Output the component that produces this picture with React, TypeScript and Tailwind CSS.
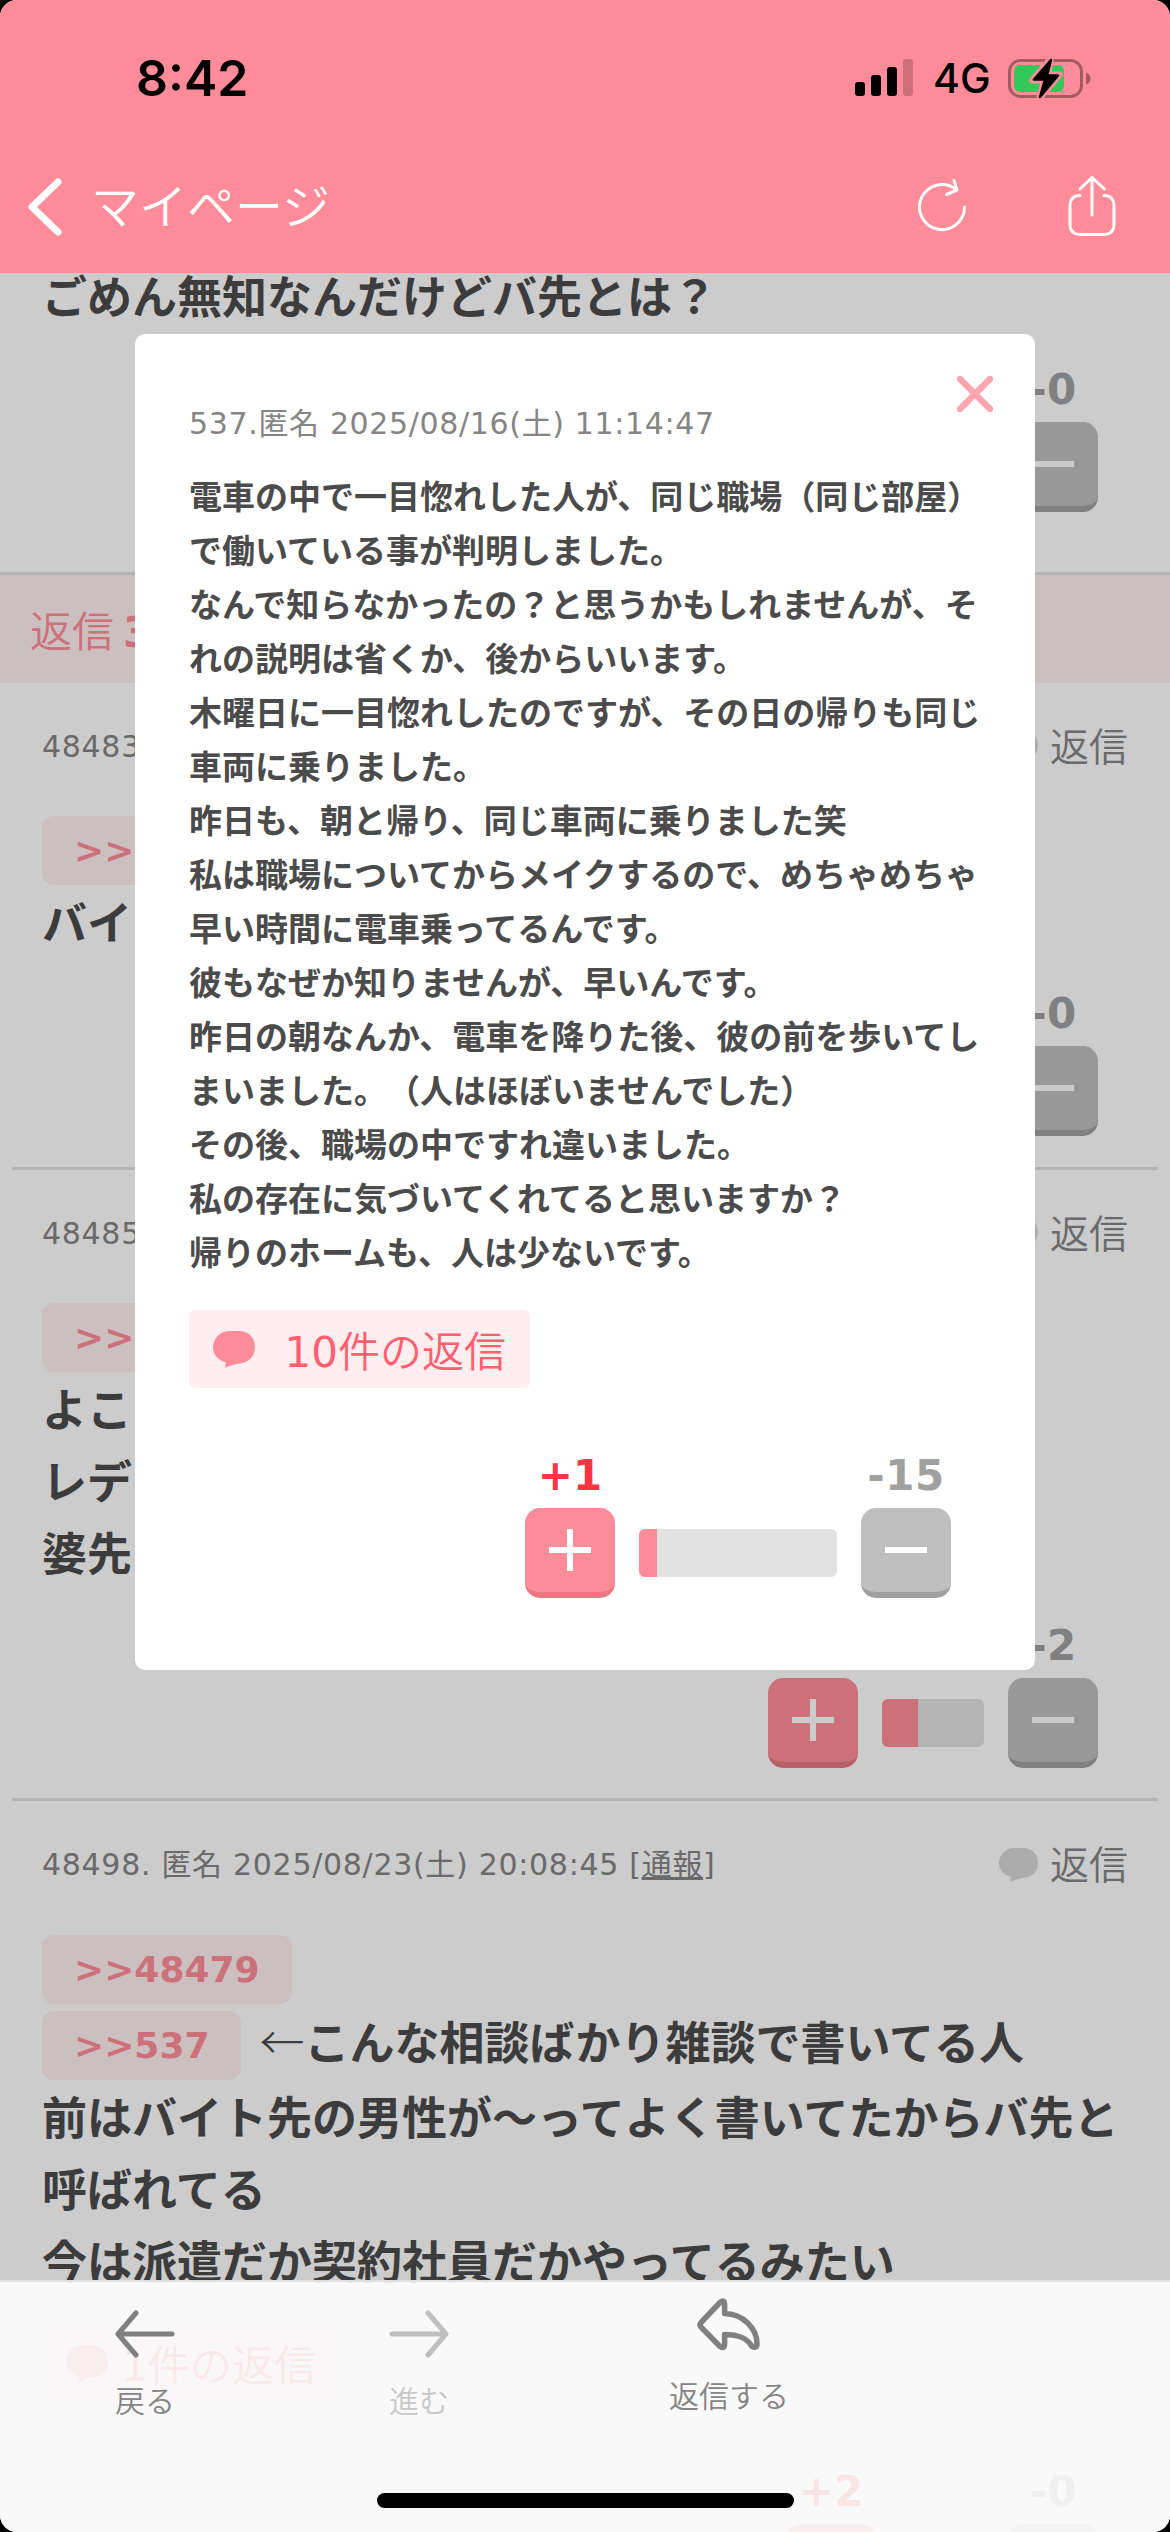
import type { ReactNode } from "react";

const jp = "font-['DejaVu_Sans','Noto_Sans_CJK_JP',sans-serif]";
const jpOnly = "font-['Noto_Sans_CJK_JP',sans-serif]";

const modalLines = [
  "電車の中で一目惚れした人が、同じ職場（同じ部屋）",
  "で働いている事が判明しました。",
  "なんで知らなかったの？と思うかもしれませんが、そ",
  "れの説明は省くか、後からいいます。",
  "木曜日に一目惚れしたのですが、その日の帰りも同じ",
  "車両に乗りました。",
  "昨日も、朝と帰り、同じ車両に乗りました笑",
  "私は職場についてからメイクするので、めちゃめちゃ",
  "早い時間に電車乗ってるんです。",
  "彼もなぜか知りませんが、早いんです。",
  "昨日の朝なんか、電車を降りた後、彼の前を歩いてし",
  "まいました。（人はほぼいませんでした）",
  "その後、職場の中ですれ違いました。",
  "私の存在に気づいてくれてると思いますか？",
  "帰りのホームも、人は少ないです。",
];

function Bubble({ className }: { className: string }) {
  return (
    <svg viewBox="0 0 42 36.5" preserveAspectRatio="none" className={className} fill="currentColor">
      <path d="M16 0H26C36 0 42 7 42 16S36 31 27 32C22 32.500 17 34 12 36.500L13 31C5 29 0 23 0 16S6 0 16 0Z" />
    </svg>
  );
}

function StatusBar() {
  return (
    <div className="flex h-[154px] items-start justify-between pl-[136px] pr-[78px] font-[Inter,sans-serif] text-black">
      <span className="mt-[48px] text-[50px] font-semibold leading-[60px]">8:42</span>
      <div className="mt-[54px] flex h-[48px] items-center">
        <svg width="60" height="40" viewBox="0 0 60 40" className="mr-[18px]">
          <rect x="0" y="24" width="10" height="14" rx="3" />
          <rect x="16" y="17" width="10" height="21" rx="3" />
          <rect x="32" y="9" width="10" height="29" rx="3" />
          <rect x="48" y="1" width="10" height="37" rx="3" opacity="0.2" />
        </svg>
        <span className="w-[75px] text-[41px] font-medium leading-[48px]">4G</span>
        <svg width="84" height="44" viewBox="0 0 84 44">
          <rect x="1.500" y="4.500" width="72" height="36" rx="11" fill="none" stroke="#a35a62" strokeWidth="3" />
          <path d="M78 16.500q4.500 1.500 4.500 6t-4.500 6z" fill="#a35a62" />
          <rect x="6" y="9" width="50" height="27" rx="6" fill="#34c759" />
          <path d="M43 2L24 24.500H36L31 43L52 18.500H40Z" fill="#000" stroke="#ff8c98" strokeWidth="6" strokeLinejoin="round" />
          <path d="M43 4L26 23.500H37L32 41L50 19.500H39Z" stroke="#000" strokeWidth="2.500" strokeLinejoin="round" />
        </svg>
      </div>
    </div>
  );
}

function Header() {
  return (
    <header className="h-[273px] bg-[#ff8c98]">
      <StatusBar />
      <nav className="flex h-[106px] items-center pl-[26px] pr-[52px] text-white">
        <svg width="38" height="60" viewBox="0 0 38 60" fill="none" stroke="currentColor" strokeWidth="7" strokeLinecap="round" strokeLinejoin="round">
          <path d="M32 5L6 30L32 55" />
        </svg>
        <span className={`mb-[8px] ml-[27px] text-[48px] font-[350] leading-[60px] ${jpOnly}`}>マイページ</span>
        <svg width="54" height="66" viewBox="0 0 54 66" className="ml-auto" fill="none" stroke="currentColor" strokeWidth="3" strokeLinecap="round" strokeLinejoin="round">
          <path d="M49.500 33A22.500 22.500 0 1 1 41 15.500" />
          <path d="M39 6.500L42 16L31.500 20.500" />
        </svg>
        <svg width="52" height="66" viewBox="0 0 52 66" className="ml-[97px]" fill="none" stroke="currentColor" strokeWidth="3" strokeLinecap="round" strokeLinejoin="round">
          <path d="M14 21.500h-1a9 9 0 0 0-9 9v21a9 9 0 0 0 9 9h26a9 9 0 0 0 9-9v-21a9 9 0 0 0-9-9h-1" />
          <path d="M26 41V3.500M14 15L26 3.500L38.500 15" />
        </svg>
      </nav>
    </header>
  );
}

function Votes({ plus, minus, bar, fill, className }: { plus?: string; minus: string; bar: number; fill: number; className: string }) {
  return (
    <div className={`flex items-end justify-end ${className}`}>
      <div className="w-[90px]">
        <p className="h-[66px] text-center font-['DejaVu_Sans',sans-serif] text-[42px] font-bold leading-[68px] text-[#ff3344]">{plus}</p>
        <div className="flex h-[90px] justify-center rounded-[15px] border-b-[6px] border-[#e87782] bg-[#ff8c98] pt-[21px]">
          <svg width="42" height="42" className="fill-white">
            <path d="M18 0h6v18h18v6h-18v18h-6v-18h-18v-6h18z" />
          </svg>
        </div>
      </div>
      <div className="mx-[24px] mb-[21px] h-[48px] overflow-hidden rounded-[6px] bg-[#e2e2e2]" style={{ width: bar }}>
        <div className="h-full bg-[#ff8c98]" style={{ width: fill }}></div>
      </div>
      <div className="w-[90px]">
        <p className="flex h-[66px] justify-center whitespace-nowrap font-['DejaVu_Sans',sans-serif] text-[42px] font-bold leading-[68px] tracking-[0.5px] text-[#a0a0a0]">{minus}</p>
        <div className="flex h-[90px] justify-center rounded-[15px] border-b-[6px] border-[#a0a0a0] bg-[#bfbfbf] pt-[39px]">
          <div className="h-[6px] w-[42px] bg-white"></div>
        </div>
      </div>
    </div>
  );
}

function Anchor({ children }: { children: ReactNode }) {
  return (
    <span className="flex h-[69px] w-fit items-center rounded-[12px] bg-[#ffeff0] px-[32px] font-['DejaVu_Sans',sans-serif] text-[36px] font-bold text-[#ff8c98]">
      {children}
    </span>
  );
}

function Line({ children }: { children: ReactNode }) {
  return <p className={`h-[72px] whitespace-nowrap text-[45px] font-bold leading-[70px] text-[#4b4b4b] [text-spacing-trim:space-all] ${jpOnly}`}>{children}</p>;
}

function Meta({ children }: { children: ReactNode }) {
  return (
    <div className="flex h-[54px] items-center text-[#858585]">
      <span className={`text-[30px] leading-[54px] tracking-[0.7px] ${jp}`}>{children}</span>
      <Bubble className="ml-auto h-[34px] w-[39px] text-[#d7d7d7]" />
      <span className={`mb-[7px] ml-[12px] text-[39px] font-[350] leading-[54px] ${jpOnly}`}>返信</span>
    </div>
  );
}

function RepliesButton({ count, className }: { count: number; className: string }) {
  return (
    <div className={`flex h-[78px] items-center rounded-[6px] bg-[#ffeef0] pl-[24px] text-[#ff5f6f] ${className}`}>
      <Bubble className="mt-px h-[37px] w-[42px] shrink-0 text-[#ff8c98]" />
      <span className={`ml-auto mt-[7px] whitespace-nowrap text-[42px] leading-[71px] ${jp}`}>
        {count}
        <span className="font-[350]">件の返信</span>
      </span>
    </div>
  );
}

function Thread() {
  return (
    <main className="h-[2259px] overflow-hidden bg-white">
      <section className="-mt-[13px] h-[312px] px-[42px]">
        <Line>ごめん無知なんだけどバ先とは？</Line>
        <Votes minus="-0" bar={102} fill={102} className="mt-[24px] pr-[30px]" />
      </section>
      <h2 className={`flex h-[111px] items-center border-t-[3px] border-[#e2e2e2] bg-[#ffeff0] pl-[30px] pt-[6px] text-[42px] text-[#ff8c98] ${jp}`}>
        <span className="font-[350]">返信</span>
        <b className="ml-[9px]">3</b>
      </h2>
      <article className="h-[484px] px-[42px] pt-[37px]">
        <Meta>48483</Meta>
        <div className="mt-[42px] pb-px">
          <Anchor>&gt;&gt;</Anchor>
        </div>
        <Line>バイ</Line>
        <Votes minus="-0" bar={102} fill={102} className="mt-[22px] pr-[30px]" />
      </article>
      <hr className="mx-[12px] border-t-[3px] border-[#e2e2e2]" />
      <article className="h-[628px] px-[42px] pt-[37px]">
        <Meta>48485</Meta>
        <div className="mt-[42px] pb-px">
          <Anchor>&gt;&gt;</Anchor>
        </div>
        <Line>よこ</Line>
        <Line>レデ</Line>
        <Line>婆先</Line>
        <Votes minus="-2" bar={102} fill={36} className="mt-[23px] pr-[30px]" />
      </article>
      <hr className="mx-[12px] border-t-[3px] border-[#e2e2e2]" />
      <article className="px-[42px] pt-[37px]">
        <Meta>
          48498. 匿名 2025/08/23(土) 20:08:45 [<u>通報</u>]
        </Meta>
        <div className="mt-[43px] flex flex-col gap-[7px] pb-px">
          <Anchor>&gt;&gt;48479</Anchor>
          <div className="flex h-[69px] gap-[18px]">
            <Anchor>&gt;&gt;537</Anchor>
            <div className="-mt-[5px]">
              <Line>
                <span className="font-light">←</span>こんな相談ばかり雑談で書いてる人
              </Line>
            </div>
          </div>
        </div>
        <Line>前はバイト先の男性が〜ってよく書いてたからバ先と</Line>
        <Line>呼ばれてる</Line>
        <Line>今は派遣だか契約社員だかやってるみたい</Line>
        <RepliesButton count={1} className="mt-[27px] w-[299px] pr-[25px]" />
        <Votes plus="+2" minus="-0" bar={84} fill={84} className="mt-[56px] pr-[30px]" />
      </article>
    </main>
  );
}

function Modal() {
  return (
    <div className="absolute left-[135px] top-[334px] h-[1336px] w-[900px] rounded-[10px] bg-white px-[54px] pt-[42px]">
      <div className="flex justify-end">
        <svg width="36" height="36" viewBox="0 0 36 36" className="-mr-[12px]" stroke="#ffa5af" strokeWidth="6.5" strokeLinecap="round">
          <path d="M3 3L33 33M33 3L3 33" />
        </svg>
      </div>
      <p className={`-mt-[12px] h-[46px] text-[30px] leading-[48px] tracking-[0.65px] text-[#858585] ${jp}`}>537.匿名 2025/08/16(土) 11:14:47</p>
      <div className={`mt-[22px] whitespace-nowrap text-[33px] font-bold leading-[54px] text-[#4b4b4b] [text-spacing-trim:space-all] ${jpOnly}`}>
        {modalLines.map((line) => (
          <p key={line}>{line}</p>
        ))}
      </div>
      <RepliesButton count={10} className="mt-[32px] w-[341px] pr-[24px]" />
      <Votes plus="+1" minus="-15" bar={198} fill={18} className="mt-[54px] pr-[30px]" />
    </div>
  );
}

function Toolbar() {
  return (
    <footer className="absolute inset-x-0 bottom-0 h-[252px] border-t-2 border-[#e0e0e0] bg-white/88">
      <div className={`flex text-[30px] font-[350] leading-[44px] text-[#858585] ${jpOnly}`}>
        <div className="ml-[85px] flex w-[120px] flex-col items-center pt-[27px]">
          <svg width="60" height="50" viewBox="0 0 60 50" fill="none" stroke="#808080" strokeWidth="5" strokeLinecap="round" strokeLinejoin="round">
            <path d="M57 25H3M21 4L3 25L21 46" />
          </svg>
          <span className="mt-[18px]">戻る</span>
        </div>
        <div className="ml-[154px] flex w-[120px] flex-col items-center pt-[27px] text-[#c8c8c8]">
          <svg width="60" height="50" viewBox="0 0 60 50" fill="none" stroke="#bfbfbf" strokeWidth="5" strokeLinecap="round" strokeLinejoin="round">
            <path d="M3 25H57M39 4L57 25L39 46" />
          </svg>
          <span className="mt-[18px]">進む</span>
        </div>
        <div className="ml-[170px] flex w-[160px] flex-col items-center pt-[16px]">
          <svg width="64" height="54" viewBox="0 0 64 54" fill="none" stroke="#808080" strokeWidth="5.5" strokeLinejoin="round">
            <path d="M4 24.500L23 4.500Q27.500 1 27.600 6V15.500C46 16 60 30 60 46Q60 51 55 48.500C50 40 42 36.500 27.600 36.500V46Q27.500 51.500 23 48.500L4 29Q2 27 4 24.500Z" />
          </svg>
          <span className="mt-[20px]">返信する</span>
        </div>
      </div>
      <div className="absolute bottom-[24px] left-[377px] h-[15px] w-[417px] rounded-full bg-black"></div>
    </footer>
  );
}

export default function App() {
  return (
    <div className="h-[2532px] w-[1170px] bg-black">
      <div className="relative h-full overflow-hidden rounded-[17px] bg-white">
        <Header />
        <Thread />
        <div className="absolute inset-x-0 bottom-0 top-[273px] bg-black/20"></div>
        <Modal />
        <Toolbar />
      </div>
    </div>
  );
}
